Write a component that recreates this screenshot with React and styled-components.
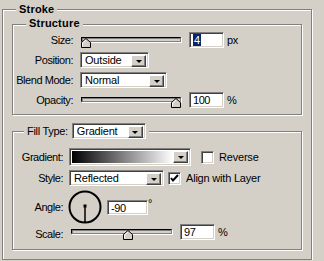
import React from 'react';
import styled, { createGlobalStyle, css } from 'styled-components';

const GlobalStyle = createGlobalStyle`
  html, body {
    margin: 0;
    background: #d4d0c8;
    overflow: hidden;
  }
  body {
    font-family: "Liberation Sans", Arial, sans-serif;
    font-size: 11px;
    letter-spacing: -0.45px;
    color: #000;
  }
`;

const sunken = css`
  box-sizing: border-box;
  border: 1px solid;
  border-color: #808080 #fff #fff #808080;
  box-shadow: inset 1px 1px 0 #404040, inset -1px -1px 0 #d4d0c8;
`;

const raised = css`
  box-sizing: border-box;
  background: #d4d0c8;
  border: 1px solid;
  border-color: #fff #404040 #404040 #fff;
  box-shadow: inset -1px -1px 0 #808080;
`;

const Group = styled.div`
  position: relative;
  box-sizing: border-box;
  width: ${p => p.$width}px;
  height: ${p => p.$height}px;
  margin: ${p => p.$margin || 0};
  padding: ${p => p.$pad || 0};
  border: 1px solid #808080;
  box-shadow: 1px 1px 0 #fff, inset 1px 1px 0 #fff;
`;

const Legend = styled.div`
  position: absolute;
  top: ${p => p.$top}px;
  left: ${p => p.$left}px;
  padding: 0 3px;
  background: #d4d0c8;
  display: flex;
  align-items: center;
  gap: 4px;
  font-weight: ${p => (p.$bold ? 'bold' : 'normal')};
  line-height: 13px;
  letter-spacing: ${p => (p.$bold ? '0.2px' : '-0.3px')};
`;

const Form = styled.div`
  display: grid;
  grid-template-columns: ${p => p.$label}px auto;
  column-gap: ${p => p.$gap}px;
  row-gap: 4px;
  align-items: center;
`;

const Label = styled.div`
  text-align: right;
  white-space: nowrap;
`;

const Controls = styled.div`
  display: flex;
  align-items: center;
  gap: ${p => p.$gap ?? 8}px;
  margin-left: ${p => p.$shift || 0}px;
  margin-top: ${p => p.$mt || 0}px;
`;

const SelectBox = styled.div`
  ${sunken};
  position: relative;
  width: ${p => p.$width}px;
  height: 16px;
  background: #fff;
  padding: 1px 0 0 4px;
  line-height: 13px;
  white-space: nowrap;
  letter-spacing: -0.2px;
`;

const ArrowButton = styled.div`
  ${raised};
  position: absolute;
  top: 2px;
  right: 2px;
  width: 15px;
  height: 12px;
  display: flex;
  align-items: center;
  justify-content: center;
  &::after {
    content: '';
    border-left: 3px solid transparent;
    border-right: 3px solid transparent;
    border-top: 3px solid #000;
  }
`;

const Field = styled.div`
  ${sunken};
  width: ${p => p.$width}px;
  height: ${p => p.$height || 16}px;
  background: #fff;
  padding: 1px 0 0 3px;
  line-height: 13px;
`;

const Selected = styled.span`
  background: #0a246a;
  color: #fff;
  padding: 0 1px;
`;

const Unit = styled.span`
  margin-left: -5px;
  margin-top: ${p => p.$mt || 0}px;
`;

const Track = styled.div`
  position: relative;
  width: ${p => p.$width}px;
  height: 16px;
  margin-left: ${p => p.$shift || 0}px;
`;

const Rail = styled.div`
  box-sizing: border-box;
  position: absolute;
  left: 0;
  right: 0;
  top: 5px;
  height: 5px;
  border: 1px solid;
  border-color: #000 #808080 #808080 #000;
  background: #d4d0c8;
  box-shadow: inset 1px 1px 0 #808080, 1px 1px 0 #fff;
`;

const Thumb = styled.svg`
  position: absolute;
  top: 6px;
  width: 10px;
  height: 10px;
`;

const GradientBox = styled.div`
  ${sunken};
  position: relative;
  width: ${p => p.$width}px;
  height: 18px;
  padding: 2px 17px 2px 2px;
  background: #fff;
  &::before {
    content: '';
    display: block;
    height: 100%;
    background: linear-gradient(to right, #000, #fff);
  }
`;

const CheckBox = styled.div`
  ${sunken};
  width: 13px;
  height: 13px;
  background: #fff;
  display: flex;
  align-items: center;
  justify-content: center;
`;

const Check = styled.label`
  display: flex;
  align-items: center;
  gap: 5px;
  white-space: nowrap;
  letter-spacing: -0.2px;
`;

const Dial = styled.svg`
  width: 34px;
  height: 34px;
  display: block;
`;

function Select({ width, children }) {
  return (
    <SelectBox $width={width}>
      {children}
      <ArrowButton />
    </SelectBox>
  );
}

function Slider({ width, value, shift }) {
  const left = Math.round(value * (width - 10));
  return (
    <Track $width={width} $shift={shift}>
      <Rail />
      <Thumb viewBox="0 0 10 10" style={{ left }}>
        <polygon points="0.5,9.5 0.5,4.5 5,0.5 9.5,4.5 9.5,9.5" fill="#d4d0c8" stroke="#000" strokeWidth="1" />
        <polyline points="1.5,8.5 1.5,5 5,2" fill="none" stroke="#fff" strokeWidth="1" />
      </Thumb>
    </Track>
  );
}

function CheckField({ checked, children }) {
  return (
    <Check>
      <CheckBox>
        {checked && (
          <svg width="9" height="9" viewBox="0 0 9 9">
            <polyline points="1,4 3,6.5 8,1" fill="none" stroke="#000" strokeWidth="2" />
          </svg>
        )}
      </CheckBox>
      {children}
    </Check>
  );
}

function AngleDial() {
  return (
    <Dial viewBox="0 0 34 34">
      <circle cx="17" cy="17" r="15.5" fill="none" stroke="#000" strokeWidth="2" />
      <rect x="15.5" y="14.5" width="3" height="3" fill="#000" />
      <line x1="17" y1="16" x2="17" y2="32" stroke="#000" strokeWidth="1.5" />
    </Dial>
  );
}

export default function App() {
  return (
    <>
      <GlobalStyle />
      <Group $width={310} $height={251} $margin="9px 0 0 2px" $pad="14px 0 0 9px">
        <Legend $top={-7} $left={13} $bold>Stroke</Legend>

        <Group $width={290} $height={91} $pad="7px 0 0 0">
          <Legend $top={-8} $left={13} $bold>Structure</Legend>
          <Form $label={60} $gap={7}>
            <Label>Size:</Label>
            <Controls>
              <Slider width={100} value={0} shift={1} />
              <Field $width={35}><Selected>4</Selected></Field>
              <Unit>px</Unit>
            </Controls>

            <Label>Position:</Label>
            <Controls>
              <Select width={69}>Outside</Select>
            </Controls>

            <Label>Blend Mode:</Label>
            <Controls>
              <Select width={87}>Normal</Select>
            </Controls>

            <Label>Opacity:</Label>
            <Controls>
              <Slider width={100} value={1} shift={1} />
              <Field $width={35}>100</Field>
              <Unit>%</Unit>
            </Controls>
          </Form>
        </Group>

        <Group $width={290} $height={119} $margin="16px 0 0 0" $pad="16px 0 0 0">
          <Legend $top={-9} $left={11}>
            Fill Type:
            <Select width={74}>Gradient</Select>
          </Legend>
          <Form $label={50} $gap={6}>
            <Label>Gradient:</Label>
            <Controls $gap={10}>
              <GradientBox $width={122}>
                <ArrowButton />
              </GradientBox>
              <CheckField>Reverse</CheckField>
            </Controls>

            <Label>Style:</Label>
            <Controls $gap={4}>
              <Select width={95}>Reflected</Select>
              <CheckField checked>Align with Layer</CheckField>
            </Controls>

            <Label>Angle:</Label>
            <Controls $gap={5} $shift={-1}>
              <AngleDial />
              <Field $width={41} $height={15}>-90</Field>
              <Unit $mt={-8}>°</Unit>
            </Controls>

            <Label>Scale:</Label>
            <Controls $gap={8} $mt={-4}>
              <Slider width={101} value={0.57} shift={2} />
              <Field $width={35}>97</Field>
              <Unit>%</Unit>
            </Controls>
          </Form>
        </Group>
      </Group>
    </>
  );
}
